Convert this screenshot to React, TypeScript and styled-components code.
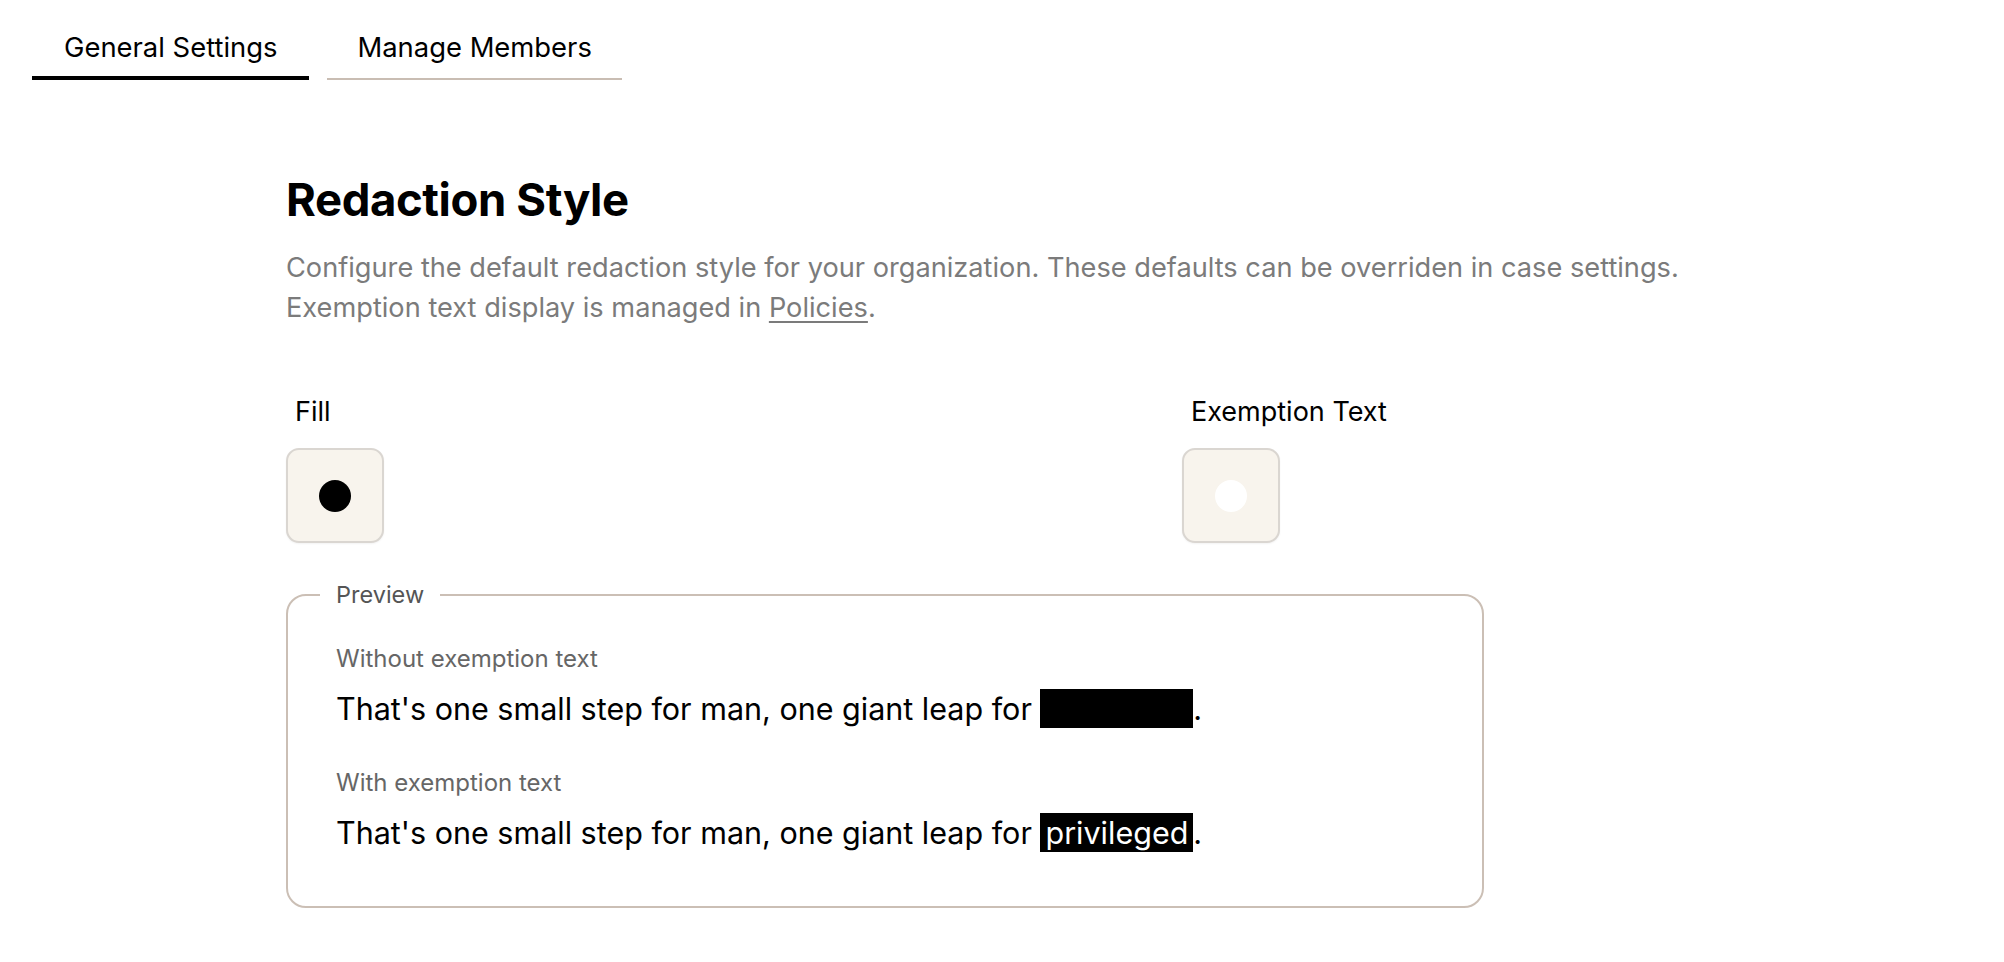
import React from "react";
import styled, { createGlobalStyle } from "styled-components";

const GlobalStyle = createGlobalStyle`
  body {
    margin: 0;
    background: #ffffff;
    font-family: Inter, "Noto Sans", sans-serif;
    color: #000;
  }
`;

const TabBar = styled.nav`
  display: flex;
  align-items: flex-end;
  gap: 18px;
  padding-left: 32px;
`;

const Tab = styled.button<{ $active?: boolean }>`
  font-family: inherit;
  font-size: 27.4px;
  line-height: 32px;
  color: #000;
  background: transparent;
  border: none;
  border-bottom: ${p => (p.$active ? "4px solid #000" : "2px solid #c9bdb3")};
  padding: 31px ${p => (p.$active ? "32px" : "30px")} ${p => (p.$active ? "13px" : "15px")};
  cursor: pointer;
`;

const Content = styled.main`
  padding: 92px 0 0 286px;
`;

const Heading = styled.h1`
  margin: 0;
  font-size: 45.5px;
  line-height: 56px;
  font-weight: 700;
  letter-spacing: -0.4px;
`;

const Description = styled.p`
  margin: 20px 0 0;
  font-size: 27.2px;
  line-height: 40px;
  color: #7b7b7b;
  max-width: 1480px;

  a {
    color: inherit;
    text-decoration: underline;
    text-underline-offset: 4px;
  }
`;

const OptionGrid = styled.div`
  display: grid;
  grid-template-columns: 896px auto;
  margin-top: 68px;
`;

const Option = styled.div`
  display: flex;
  flex-direction: column;
  gap: 20px;
`;

const OptionLabel = styled.span`
  font-size: 27px;
  line-height: 32px;
  padding-left: 9px;
`;

const Swatch = styled.button`
  width: 98px;
  height: 95px;
  box-sizing: border-box;
  border: 2px solid #dad6d1;
  border-radius: 13px;
  background: #f8f4ed;
  display: flex;
  align-items: center;
  justify-content: center;
  box-shadow: 0 1px 2px rgba(0, 0, 0, 0.05);
  cursor: pointer;
`;

const Dot = styled.span<{ $color: string }>`
  width: 32px;
  height: 32px;
  border-radius: 50%;
  background: ${p => p.$color};
`;

const Preview = styled.fieldset`
  margin: 38px 0 0;
  width: 1198px;
  box-sizing: border-box;
  border: 2px solid #cbbfb5;
  border-radius: 20px;
  padding: 0 48px 53px;
`;

const Legend = styled.legend`
  font-size: 23.5px;
  line-height: 28px;
  color: #555;
  padding: 0 16px;
  margin-left: -16px;
`;

const SampleLabel = styled.div<{ $first?: boolean }>`
  font-size: 24px;
  line-height: 28px;
  color: #666;
  margin-top: ${p => (p.$first ? "36px" : "40px")};
`;

const Sentence = styled.div`
  font-size: 30.5px;
  line-height: 40px;
  margin-top: 16px;
`;

const Redacted = styled.span<{ $showText?: boolean }>`
  background: #000;
  color: ${p => (p.$showText ? "#fff" : "#000")};
  padding: 1px 5px;
`;

const App: React.FC = () => {
  return (
    <>
      <GlobalStyle />
      <TabBar>
        <Tab $active>General Settings</Tab>
        <Tab>Manage Members</Tab>
      </TabBar>

      <Content>
        <Heading>Redaction Style</Heading>
        <Description>
          Configure the default redaction style for your organization. These defaults can be overriden in case settings.
          <br />
          Exemption text display is managed in <a href="#">Policies</a>.
        </Description>

        <OptionGrid>
          <Option>
            <OptionLabel>Fill</OptionLabel>
            <Swatch>
              <Dot $color="#000" />
            </Swatch>
          </Option>
          <Option>
            <OptionLabel>Exemption Text</OptionLabel>
            <Swatch>
              <Dot $color="#fff" />
            </Swatch>
          </Option>
        </OptionGrid>

        <Preview>
          <Legend>Preview</Legend>
          <SampleLabel $first>Without exemption text</SampleLabel>
          <Sentence>
            That's one small step for man, one giant leap for <Redacted>privileged</Redacted>.
          </Sentence>
          <SampleLabel>With exemption text</SampleLabel>
          <Sentence>
            That's one small step for man, one giant leap for <Redacted $showText>privileged</Redacted>.
          </Sentence>
        </Preview>
      </Content>
    </>
  );
};

export default App;
